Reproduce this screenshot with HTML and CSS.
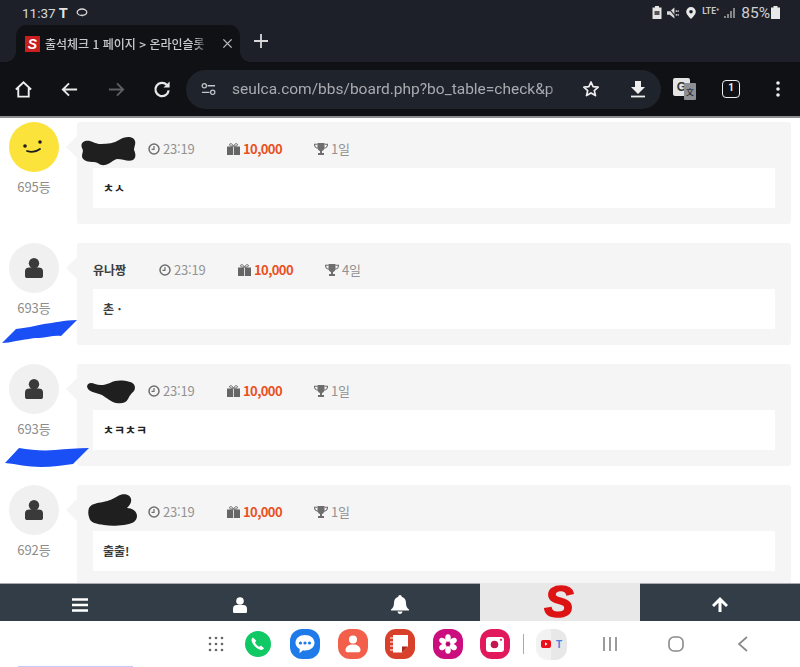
FILE: index.html
```html
<!DOCTYPE html>
<html lang="ko">
<head>
<meta charset="utf-8">
<title>출석체크</title>
<link rel="stylesheet" href="styles.css">
</head>
<body>
<div class="screen">
  <div class="status">
    <div class="status-left">
      <span class="clock">11:37</span>
      <span class="t-icon">T</span>
      <svg class="ic-chat" viewBox="0 0 12 9"><ellipse cx="6" cy="4.200" rx="4.800" ry="3.200" fill="none" stroke="#d8d8d8" stroke-width="1.300"/><path d="M4 7.500l3 1-1-2z" fill="#d8d8d8"/></svg>
    </div>
    <div class="status-right">
      <svg class="s1" viewBox="0 0 10 13"><path d="M3 0h4v1.500h2.500v11.500h-9v-11.500h2.500z" fill="#e4e4e4"/><rect x="2.500" y="5" width="5" height="4" fill="#555"/></svg>
      <svg class="s2" viewBox="0 0 14 12"><path d="M0 4h3l5-4v12l-5-4h-3z" fill="#d8d8d8"/><path d="M1 0l10 12" stroke="#1d2029" stroke-width="1.100"/><path d="M10 3v2M12 3v2M10 7v2M12 7v2" stroke="#d8d8d8" stroke-width="1.200"/></svg>
      <svg class="s3" viewBox="0 0 10 12"><path fill-rule="evenodd" d="M5 0a4.800 4.800 0 0 1 4.800 4.800c0 3-4.800 7.200-4.800 7.200s-4.800-4.200-4.800-7.200a4.800 4.800 0 0 1 4.800-4.800zm0 3a1.800 1.800 0 1 0 0 3.600 1.800 1.800 0 0 0 0-3.600z" fill="#e8e8e8"/></svg>
      <span class="lte">LTE⁺</span>
      <svg class="s4" viewBox="0 0 12 11"><path d="M1 9v2M4 7v4M7 4v7M10 1v10" stroke="#a8a8a8" stroke-width="1.500"/></svg>
      <span class="pct">85%</span>
      <svg class="s5" viewBox="0 0 9 13"><path d="M2.500 0h4v1.500h2.500v11.500h-9v-11.500h2.500z" fill="#e8e8e8"/></svg>
    </div>
  </div>

  <div class="tabs">
    <div class="tab">
      <span class="favicon">S</span>
      <span class="tab-title">출석체크 1 페이지 &gt; 온라인슬롯</span>
      <svg class="tab-x" viewBox="0 0 12 12"><path d="M1.500 1.500l9 9M10.500 1.500l-9 9" stroke="#b8babd" stroke-width="1.500"/></svg>
    </div>
    <svg class="tab-plus" viewBox="0 0 14 14"><path d="M7 0v14M0 7h14" stroke="#d8d8d8" stroke-width="1.800"/></svg>
  </div>

  <div class="toolbar">
    <svg class="tb home" viewBox="0 0 20 20"><path d="M2 10l8-7.500 8 7.500M4.500 8.500v9h11v-9" fill="none" stroke="#eee" stroke-width="2"/></svg>
    <svg class="tb back" viewBox="0 0 20 20"><path d="M18 10h-15M9.500 3.500l-6.500 6.500 6.500 6.500" fill="none" stroke="#e8e8e8" stroke-width="2"/></svg>
    <svg class="tb fwd" viewBox="0 0 20 20"><path d="M2 10h15M10.500 3.500l6.500 6.500-6.500 6.500" fill="none" stroke="#5c5e62" stroke-width="2"/></svg>
    <svg class="tb reload" viewBox="0 0 20 20"><path d="M16.500 11a7 7 0 1 1-2-6" fill="none" stroke="#e8e8e8" stroke-width="2.400"/><path d="M17.500 1.500v6.500h-6.500z" fill="#e8e8e8"/></svg>
    <div class="pill">
      <svg class="tune" viewBox="0 0 16 14"><circle cx="3.500" cy="3.500" r="2.300" fill="none" stroke="#c4c6ca" stroke-width="1.300"/><path d="M7 3.500h8M1 10.500h8" stroke="#c4c6ca" stroke-width="1.400"/><circle cx="12.500" cy="10.500" r="2.300" fill="none" stroke="#c4c6ca" stroke-width="1.300"/></svg>
      <span class="url">seulca.com/bbs/board.php?bo_table=check&amp;p</span>
      <svg class="star" viewBox="0 0 18 18"><path d="M9 2l2.100 4.700 5.100.5-3.900 3.400 1.200 5-4.500-2.700-4.500 2.700 1.200-5-3.900-3.400 5.100-.5z" fill="none" stroke="#eee" stroke-width="1.700" stroke-linejoin="round"/></svg>
      <svg class="dl" viewBox="0 0 16 18"><path d="M5 1h6v6h4l-7 7-7-7h4z" fill="#eee"/><path d="M1 16.500h14" stroke="#eee" stroke-width="1.800"/></svg>
    </div>
    <div class="translate"><span class="tr-g">G</span><span class="tr-x">文</span></div>
    <span class="count">1</span>
    <svg class="menu" viewBox="0 0 4 16"><circle cx="2" cy="2" r="1.800" fill="#eee"/><circle cx="2" cy="8" r="1.800" fill="#eee"/><circle cx="2" cy="14" r="1.800" fill="#eee"/></svg>
  </div>

  <main class="board">
    <article class="row">
      <div class="side">
        <div class="avatar avatar-smile">
          <svg viewBox="0 0 50 50"><circle cx="16" cy="24" r="1.800" fill="#1c1c1c"/><circle cx="31" cy="20" r="1.800" fill="#1c1c1c"/><path d="M18 29q7 2.500 13-2" fill="none" stroke="#1c1c1c" stroke-width="1.800" stroke-linecap="round"/></svg>
        </div>
        <div class="rank">695등</div>
      </div>
      <div class="card">
        <div class="meta">
          <span class="name name-hidden"></span>
          <span class="item"><svg class="i-clock" viewBox="0 0 12 12"><circle cx="6" cy="6" r="5" fill="none" stroke="#6e6e6e" stroke-width="1.500"/><path d="M6 3v3.300h-2.500" fill="none" stroke="#6e6e6e" stroke-width="1.200"/></svg>23:19</span>
          <span class="item"><svg class="i-gift" viewBox="0 0 13 12"><path d="M0 3.500h13v8.500h-13z" fill="#666"/><path d="M6.500 3.300c-1-3-4-3.300-4-1.500 0 1 2 1.500 4 1.500zm0 0c1-3 4-3.300 4-1.500 0 1-2 1.500-4 1.500zM6.500 3v9" fill="none" stroke="#666"/><path d="M6.500 3.500v8.500" stroke="#f5f5f5" stroke-width=".8"/></svg><b class="point">10,000</b></span>
          <span class="item"><svg class="i-cup" viewBox="0 0 14 12"><path d="M3.500 0h7v4.500c0 2-1.500 3.300-2.500 3.500v2h2v2h-6v-2h2v-2c-1-.2-2.500-1.500-2.500-3.500z" fill="#6e6e6e"/><path d="M3.500 1.200h-3c0 2.500 1.200 3.800 3.500 4M10.500 1.200h3c0 2.500-1.200 3.800-3.500 4" fill="none" stroke="#6e6e6e" stroke-width="1.100"/></svg>1일</span>
        </div>
        <div class="msg msg-jamo">ㅊㅅ</div>
      </div>
      <svg class="blob blob-1" viewBox="0 0 56 30"><path d="M1 11c-2-5 2-8 8-7 4 1 6 3 11 3 7 0 13-1 18-4 5-3 14-5 16 1 1 3-1 6-1 9 2 4 2 8-1 10-5 2-10-1-16-1-4 1-7 5-12 6-5 1-7-3-11-3-5 0-12-1-12-6 0-3 2-5 0-8z" fill="#1f1f1f"/></svg>
    </article>

    <article class="row">
      <div class="side">
        <div class="avatar">
          <svg class="person" viewBox="0 0 18 20"><circle cx="9" cy="5.300" r="5.200" fill="#3a3a3a"/><path d="M0 13c0-2.500 2-3.500 4.500-3.500h9c2.500 0 4.500 1 4.500 3.500v5c0 1.500-1 2-2 2h-14c-1 0-2-.5-2-2z" fill="#3a3a3a"/></svg>
        </div>
        <div class="rank">693등</div>
      </div>
      <div class="card">
        <div class="meta">
          <span class="name">유나짱</span>
          <span class="item"><svg class="i-clock" viewBox="0 0 12 12"><circle cx="6" cy="6" r="5" fill="none" stroke="#6e6e6e" stroke-width="1.500"/><path d="M6 3v3.300h-2.500" fill="none" stroke="#6e6e6e" stroke-width="1.200"/></svg>23:19</span>
          <span class="item"><svg class="i-gift" viewBox="0 0 13 12"><path d="M0 3.500h13v8.500h-13z" fill="#666"/><path d="M6.500 3.300c-1-3-4-3.300-4-1.500 0 1 2 1.500 4 1.500zm0 0c1-3 4-3.300 4-1.500 0 1-2 1.500-4 1.500zM6.500 3v9" fill="none" stroke="#666"/><path d="M6.500 3.500v8.500" stroke="#f5f5f5" stroke-width=".8"/></svg><b class="point">10,000</b></span>
          <span class="item"><svg class="i-cup" viewBox="0 0 14 12"><path d="M3.500 0h7v4.500c0 2-1.500 3.300-2.500 3.500v2h2v2h-6v-2h2v-2c-1-.2-2.500-1.500-2.500-3.500z" fill="#6e6e6e"/><path d="M3.500 1.200h-3c0 2.500 1.200 3.800 3.500 4M10.500 1.200h3c0 2.500-1.200 3.800-3.500 4" fill="none" stroke="#6e6e6e" stroke-width="1.100"/></svg>4일</span>
        </div>
        <div class="msg">촌 ·</div>
      </div>
      <svg class="scrawl scrawl-1" viewBox="0 0 76 24"><path d="M0 23l14-14c10-1 18-3 28-5 10-1 20-4 33-4l-16 16c-8-1-14 2-22 2-9 0-14 2-23 3-5 1-10 2-14 2z" fill="#1a4ff5"/></svg>
    </article>

    <article class="row">
      <div class="side">
        <div class="avatar">
          <svg class="person" viewBox="0 0 18 20"><circle cx="9" cy="5.300" r="5.200" fill="#3a3a3a"/><path d="M0 13c0-2.500 2-3.500 4.500-3.500h9c2.500 0 4.500 1 4.500 3.500v5c0 1.500-1 2-2 2h-14c-1 0-2-.5-2-2z" fill="#3a3a3a"/></svg>
        </div>
        <div class="rank">693등</div>
      </div>
      <div class="card">
        <div class="meta">
          <span class="name name-hidden"></span>
          <span class="item"><svg class="i-clock" viewBox="0 0 12 12"><circle cx="6" cy="6" r="5" fill="none" stroke="#6e6e6e" stroke-width="1.500"/><path d="M6 3v3.300h-2.500" fill="none" stroke="#6e6e6e" stroke-width="1.200"/></svg>23:19</span>
          <span class="item"><svg class="i-gift" viewBox="0 0 13 12"><path d="M0 3.500h13v8.500h-13z" fill="#666"/><path d="M6.500 3.300c-1-3-4-3.300-4-1.500 0 1 2 1.500 4 1.500zm0 0c1-3 4-3.300 4-1.500 0 1-2 1.500-4 1.500zM6.500 3v9" fill="none" stroke="#666"/><path d="M6.500 3.500v8.500" stroke="#f5f5f5" stroke-width=".8"/></svg><b class="point">10,000</b></span>
          <span class="item"><svg class="i-cup" viewBox="0 0 14 12"><path d="M3.500 0h7v4.500c0 2-1.500 3.300-2.500 3.500v2h2v2h-6v-2h2v-2c-1-.2-2.500-1.500-2.500-3.500z" fill="#6e6e6e"/><path d="M3.500 1.200h-3c0 2.500 1.200 3.800 3.500 4M10.500 1.200h3c0 2.500-1.200 3.800-3.500 4" fill="none" stroke="#6e6e6e" stroke-width="1.100"/></svg>1일</span>
        </div>
        <div class="msg msg-jamo">ㅊㅋㅊㅋ</div>
      </div>
      <svg class="blob blob-2" viewBox="0 0 50 24"><path d="M1 7c0-4 4-5 8-3 5 2 10 1 15-1 6-3 12-3 20-1 5 1 6 6 4 9-3 3-4 4-6 8-2 4-6 5-12 4-5-1-9-5-14-8-5-2-15-3-15-9z" fill="#1f1f1f"/></svg>
      <svg class="scrawl scrawl-2" viewBox="0 0 84 20"><path d="M0 16l14-15c12 2 24 3 36 2 11-1 22-2 34-2l-16 16c-10 1-20 3-32 3-14 0-24-3-36-4z" fill="#1a4ff5"/></svg>
    </article>

    <article class="row">
      <div class="side">
        <div class="avatar">
          <svg class="person" viewBox="0 0 18 20"><circle cx="9" cy="5.300" r="5.200" fill="#3a3a3a"/><path d="M0 13c0-2.500 2-3.500 4.500-3.500h9c2.500 0 4.500 1 4.500 3.500v5c0 1.500-1 2-2 2h-14c-1 0-2-.5-2-2z" fill="#3a3a3a"/></svg>
        </div>
        <div class="rank">692등</div>
      </div>
      <div class="card">
        <div class="meta">
          <span class="name name-hidden"></span>
          <span class="item"><svg class="i-clock" viewBox="0 0 12 12"><circle cx="6" cy="6" r="5" fill="none" stroke="#6e6e6e" stroke-width="1.500"/><path d="M6 3v3.300h-2.500" fill="none" stroke="#6e6e6e" stroke-width="1.200"/></svg>23:19</span>
          <span class="item"><svg class="i-gift" viewBox="0 0 13 12"><path d="M0 3.500h13v8.500h-13z" fill="#666"/><path d="M6.500 3.300c-1-3-4-3.300-4-1.500 0 1 2 1.500 4 1.500zm0 0c1-3 4-3.300 4-1.500 0 1-2 1.500-4 1.500zM6.500 3v9" fill="none" stroke="#666"/><path d="M6.500 3.500v8.500" stroke="#f5f5f5" stroke-width=".8"/></svg><b class="point">10,000</b></span>
          <span class="item"><svg class="i-cup" viewBox="0 0 14 12"><path d="M3.500 0h7v4.500c0 2-1.500 3.300-2.500 3.500v2h2v2h-6v-2h2v-2c-1-.2-2.500-1.500-2.500-3.500z" fill="#6e6e6e"/><path d="M3.500 1.200h-3c0 2.500 1.200 3.800 3.500 4M10.500 1.200h3c0 2.500-1.200 3.800-3.500 4" fill="none" stroke="#6e6e6e" stroke-width="1.100"/></svg>1일</span>
        </div>
        <div class="msg">출출!</div>
      </div>
      <svg class="blob blob-3" viewBox="0 0 50 33"><path d="M1 14c2-4 8-5 14-6 6-1 10-3 15-6 5-3 12-2 13 3 1 4-2 7-4 9 5 0 10 3 10 8 0 6-6 8-13 9-8 1-14 1-20 0-7-1-14-2-15-8-1-3-1-6 0-9z" fill="#1f1f1f"/></svg>
    </article>
  </main>

  <nav class="tabbar">
    <div class="tabbar-cell"><svg class="nav-bars" viewBox="0 0 16 14"><path d="M0 1.500h16M0 7h16M0 12.500h16" stroke="#fff" stroke-width="2.400"/></svg></div>
    <div class="tabbar-cell"><svg class="nav-user" viewBox="0 0 14 16"><circle cx="7" cy="4" r="3.800" fill="#fff"/><path d="M0 11.500c0-2.500 2-3.500 3.500-3.500h7c1.500 0 3.500 1 3.500 3.500v3c0 1-.7 1.500-1.500 1.500h-11c-.8 0-1.500-.5-1.500-1.500z" fill="#fff"/></svg></div>
    <div class="tabbar-cell"><svg class="nav-bell" viewBox="0 0 18 19"><path d="M9 0c1 0 1.700.8 1.700 1.700 3 .8 4.300 3.300 4.300 6.300 0 3 .8 4.700 3 6.500v1h-18v-1c2.200-1.800 3-3.500 3-6.500 0-3 1.300-5.500 4.300-6.300 0-.9.700-1.700 1.700-1.700zM6.500 16.500h5a2.500 2.500 0 0 1-5 0z" fill="#fff"/></svg></div>
    <div class="tabbar-cell tabbar-logo"><span class="logo-s">S</span></div>
    <div class="tabbar-cell"><svg class="nav-up" viewBox="0 0 16 15"><path d="M8 0l8 8-2 2-4.500-4.300v9.300h-3v-9.300l-4.500 4.300-2-2z" fill="#fff"/></svg></div>
  </nav>

  <footer class="dock">
    <svg class="grid-ic" viewBox="0 0 16 16"><g fill="#666"><circle cx="2" cy="2" r="1.300"/><circle cx="8" cy="2" r="1.300"/><circle cx="14" cy="2" r="1.300"/><circle cx="2" cy="8" r="1.300"/><circle cx="8" cy="8" r="1.300"/><circle cx="14" cy="8" r="1.300"/><circle cx="2" cy="14" r="1.300"/><circle cx="8" cy="14" r="1.300"/><circle cx="14" cy="14" r="1.300"/></g></svg>
    <div class="apps">
      <svg class="app" viewBox="0 0 30 30"><circle cx="15" cy="15" r="13" fill="#10c864"/><path d="M10 8.500c-1.500 1-2 2.500-1 4.500 1.500 3.500 4 6 7.500 7.500 2 .8 3.500.3 4.500-1.200l-3-2.800-1.800 1.200c-2-1-3.200-2.300-4.200-4.200l1.300-1.800z" fill="#fff"/></svg>
      <svg class="app" viewBox="0 0 30 30"><rect width="30" height="30" rx="12" fill="#1f7bea"/><path d="M15 6c5.500 0 9.500 3.300 9.500 7.800s-4 7.700-9.500 7.700c-.7 0-1.300 0-2-.2l-3.500 3 .2-4.200c-2.600-1.400-4.200-3.700-4.200-6.300 0-4.500 4-7.800 9.500-7.800z" fill="#fff"/><g fill="#1f7bea"><circle cx="10.500" cy="14" r="1.600"/><circle cx="15" cy="14" r="1.600"/><circle cx="19.500" cy="14" r="1.600"/></g></svg>
      <svg class="app" viewBox="0 0 30 30"><rect width="30" height="30" rx="12" fill="#f2604c"/><circle cx="15" cy="10.500" r="4" fill="#fff"/><path d="M7.500 21c0-3.500 3.500-5.500 7.500-5.500s7.500 2 7.500 5.500c0 1.500-1 2.300-2.500 2.300h-10c-1.500 0-2.500-.8-2.500-2.300z" fill="#fff"/></svg>
      <svg class="app" viewBox="0 0 30 30"><rect width="30" height="30" rx="11" fill="#d9402c"/><path d="M8 6h15v11.500l-6 6h-9z" fill="#fff"/><path d="M23 17.500h-6v6z" fill="#a8281a"/><path d="M5 9h3M5 13h3M5 17h3M5 21h3" stroke="#fff" stroke-width="1.200"/></svg>
      <svg class="app" viewBox="0 0 30 30"><rect width="30" height="30" rx="12" fill="#cc0d7e"/><g fill="#fff"><ellipse cx="15" cy="9" rx="2.800" ry="3.800"/><ellipse cx="15" cy="21" rx="2.800" ry="3.800"/><ellipse cx="15" cy="9" rx="2.800" ry="3.800" transform="rotate(60 15 15)"/><ellipse cx="15" cy="9" rx="2.800" ry="3.800" transform="rotate(120 15 15)"/><ellipse cx="15" cy="9" rx="2.800" ry="3.800" transform="rotate(240 15 15)"/><ellipse cx="15" cy="9" rx="2.800" ry="3.800" transform="rotate(300 15 15)"/></g><circle cx="15" cy="15" r="1.800" fill="#a80c68"/></svg>
      <svg class="app" viewBox="0 0 30 30"><rect width="30" height="30" rx="12" fill="#e2185c"/><rect x="6" y="8" width="18" height="15" rx="3" fill="#fff"/><circle cx="14.500" cy="15.500" r="3.800" fill="#c21650"/><circle cx="21" cy="10.800" r="1.100" fill="#e2185c"/></svg>
    </div>
    <span class="dock-sep"></span>
    <div class="combo">
      <svg class="combo-yt" viewBox="0 0 10 8"><rect width="10" height="8" rx="2" fill="#e8121a"/><path d="M4 2.300l2.500 1.700-2.500 1.700z" fill="#fff"/></svg>
      <span class="combo-t">T</span>
    </div>
    <svg class="sys sys-recent" viewBox="0 0 16 16"><path d="M2 1v14M8 1v14M14 1v14" stroke="#8a8a8a" stroke-width="1.700"/></svg>
    <svg class="sys sys-home" viewBox="0 0 16 16"><rect x="1" y="1" width="14" height="14" rx="5" fill="none" stroke="#8a8a8a" stroke-width="1.600"/></svg>
    <svg class="sys sys-back" viewBox="0 0 12 16"><path d="M10 1l-8 7 8 7" fill="none" stroke="#8a8a8a" stroke-width="1.700"/></svg>
    <span class="peek"></span>
  </footer>
</div>
</body>
</html>
```

FILE: styles.css
```css
* { box-sizing: border-box; }
html, body { margin: 0; height: 100%; background: #fff; }
body { font-family: "Noto Sans CJK KR", "Noto Sans", sans-serif; overflow: hidden; }

.screen {
  width: 800px;
  height: 667px;
  display: flex;
  flex-direction: column;
  overflow: hidden;
  filter: blur(0.45px);
}

/* status bar */
.status {
  height: 25px;
  flex: none;
  background: #1d2029;
  display: flex;
  justify-content: space-between;
  align-items: center;
  padding: 0 20px 0 22px;
  color: #d8d8d8;
}
.status-left, .status-right { display: flex; align-items: center; }
.clock { font: 13.500px "Roboto", sans-serif; width: 37px; }
.t-icon { font: bold 14px "Liberation Sans", sans-serif; color: #e4e4e4; width: 17px; }
.ic-chat { width: 12px; height: 9px; }
.status-right svg { flex: none; }
.s1 { width: 10px; height: 13px; margin-right: 5px; }
.s2 { width: 13px; height: 12px; margin-right: 6px; }
.s3 { width: 10px; height: 12px; margin-right: 6px; }
.lte { font: bold 8.500px "Roboto", sans-serif; color: #c8c8c8; width: 22px; margin-top: -4px; }
.s4 { width: 12px; height: 11px; margin-right: 5px; }
.pct { font: 15.500px "Roboto", sans-serif; color: #d0d0d0; margin-right: 1px; }
.s5 { width: 9px; height: 13px; }

/* tab strip */
.tabs {
  height: 37px;
  flex: none;
  background: #1d2029;
  display: flex;
  align-items: flex-end;
  padding-left: 16px;
}
.tab {
  position: relative;
  width: 224px;
  height: 37px;
  background: #101114;
  border-radius: 11px 11px 0 0;
  display: flex;
  align-items: center;
  padding: 0 7px 0 9px;
}
.tab::before, .tab::after {
  content: "";
  position: absolute;
  bottom: 0;
  width: 10px;
  height: 10px;
}
.tab::before { left: -10px; background: radial-gradient(circle at 0 0, #1d2029 9.500px, #101114 10px); }
.tab::after { right: -10px; background: radial-gradient(circle at 100% 0, #1d2029 9.500px, #101114 10px); }
.favicon {
  width: 15px;
  height: 16px;
  flex: none;
  background: #c9201f;
  color: #fff;
  font: italic bold 14px/16px "Liberation Sans", sans-serif;
  text-align: center;
  margin-right: 5px;
}
.tab-title {
  flex: 1;
  min-width: 0;
  font-size: 12px;
  font-weight: 500;
  line-height: 16px;
  color: #c8c9cc;
  white-space: nowrap;
  overflow: hidden;
  -webkit-mask-image: linear-gradient(90deg, #000 88%, transparent 97%);
  mask-image: linear-gradient(90deg, #000 88%, transparent 97%);
}
.tab-x { width: 11px; height: 11px; flex: none; margin-left: 8px; }
.tab-plus { width: 14px; height: 14px; margin: 0 0 14px 14px; }

/* toolbar */
.toolbar {
  height: 54px;
  flex: none;
  background: #101114;
  display: flex;
  align-items: center;
  padding-left: 14px;
}
.tb { width: 19px; height: 19px; flex: none; }
.home { margin-right: 27px; }
.back { margin-right: 28px; }
.fwd { margin-right: 27px; }
.reload { margin-right: 14px; }
.pill {
  width: 475px;
  height: 39px;
  background: #1f232b;
  border-radius: 20px;
  display: flex;
  align-items: center;
  padding-left: 15px;
  flex: none;
}
.tune { width: 15px; height: 14px; flex: none; margin-right: 16px; }
.url {
  width: 329px;
  font: 15.500px "Roboto", sans-serif;
  color: #a9abb0;
  white-space: nowrap;
  overflow: hidden;
  flex: none;
  -webkit-mask-image: linear-gradient(90deg, #000 96%, transparent 100%);
  mask-image: linear-gradient(90deg, #000 96%, transparent 100%);
}
.star { width: 18px; height: 18px; flex: none; margin-left: 21px; }
.dl { width: 16px; height: 18px; flex: none; margin-left: 30px; }
.translate { position: relative; width: 23px; height: 22px; margin-left: 12px; flex: none; }
.tr-g {
  display: block;
  width: 17px;
  height: 18px;
  background: #e4e4e4;
  border-radius: 2px;
  font: bold 12px/18px "Liberation Sans", sans-serif;
  color: #333;
  text-align: center;
}
.tr-x {
  position: absolute;
  right: 0;
  bottom: 0;
  width: 12px;
  height: 17px;
  background: #8d8f94;
  border-radius: 1px;
  font-size: 8px;
  line-height: 17px;
  color: #111;
  text-align: center;
}
.count {
  width: 18px;
  height: 18px;
  margin-left: 26px;
  flex: none;
  border: 1.800px solid #eee;
  border-radius: 4px;
  color: #eee;
  font: bold 10px/14px "Roboto", sans-serif;
  text-align: center;
}
.menu { width: 4px; height: 16px; margin-left: 36px; flex: none; }

/* board */
.board {
  flex: 1;
  min-height: 0;
  overflow: hidden;
  background: #fff;
  border-top: 2px solid #8d8e90;
  padding: 4px 9px 0;
  display: flex;
  flex-direction: column;
  gap: 19px;
}
.row { display: flex; flex: none; height: 102px; position: relative; }
.side { width: 50px; flex: none; display: flex; flex-direction: column; align-items: center; }
.avatar {
  width: 50px;
  height: 50px;
  border-radius: 50%;
  background: #f0f0f0;
  display: flex;
  align-items: center;
  justify-content: center;
  flex: none;
}
.avatar-smile { background: #fbe33b; }
.avatar-smile svg { width: 50px; height: 50px; }
.person { width: 18px; height: 20px; }
.rank { font-size: 13px; line-height: 18px; color: #8c8c8c; margin-top: 6px; }
.card {
  position: relative;
  margin-left: 18px;
  width: 714px;
  height: 102px;
  flex: none;
  background: #f5f5f5;
  border-radius: 3px;
  padding: 0 16px;
}
.card::before {
  content: "";
  position: absolute;
  left: -11px;
  top: 14px;
  border-style: solid;
  border-width: 11px 11px 11px 0;
  border-color: transparent #f5f5f5 transparent transparent;
}
.meta { height: 46px; display: flex; align-items: center; gap: 32px; padding-top: 7px; }
.name { font-size: 12px; font-weight: 700; color: #3c3c3c; width: 34px; white-space: nowrap; }
.name-hidden { width: 23px; }
.item { display: flex; align-items: center; font-size: 13px; line-height: 18px; color: #929292; letter-spacing: -0.2px; }
.item svg { flex: none; }
.i-clock { width: 12px; height: 12px; margin-right: 3px; }
.i-gift { width: 13px; height: 12px; margin-right: 3.500px; }
.i-cup { width: 14px; height: 12px; margin-right: 3px; }
.point { color: #e9501e; font-weight: 700; letter-spacing: -0.6px; }
.msg {
  height: 40px;
  background: #fff;
  padding-left: 10px;
  font-size: 12px;
  line-height: 40px;
  color: #3c3c3c;
  font-weight: 700;
}
.msg-jamo { color: #222; }
.blob { position: absolute; }
.blob-1 { left: 72px; top: 15px; width: 56px; height: 30px; }
.blob-2 { left: 77px; top: 16px; width: 50px; height: 24px; }
.blob-3 { left: 79px; top: 9px; width: 50px; height: 33px; }
.scrawl { position: absolute; z-index: 1; }
.scrawl-1 { left: -7px; top: 77px; width: 76px; height: 24px; }
.scrawl-2 { left: -4px; top: 83px; width: 84px; height: 20px; }

/* bottom nav */
.tabbar {
  height: 38px;
  flex: none;
  display: grid;
  grid-template-columns: repeat(5, 160px);
  background: #333d47;
  border-top: 1px solid #a8acb0;
  position: relative;
}
.tabbar-cell { display: flex; align-items: center; justify-content: center; padding-top: 4px; }
.tabbar-logo { background: #e8e8e8; padding-top: 0; margin-top: -1px; }
.logo-s {
  font: italic bold 44px/38px "Liberation Sans", sans-serif;
  color: #dd1414;
  -webkit-text-stroke: 1.500px #dd1414;
  margin-right: 2px;
}
.nav-bars { width: 16px; height: 14px; }
.nav-user { width: 14px; height: 16px; }
.nav-bell { width: 18px; height: 19px; }
.nav-up { width: 16px; height: 15px; }

/* dock */
.dock {
  height: 46px;
  flex: none;
  background: #fff;
  display: flex;
  align-items: center;
  padding: 0 0 0 208px;
  position: relative;
}
.grid-ic { width: 16px; height: 16px; flex: none; }
.apps { display: flex; gap: 17.400px; margin-left: 19px; flex: none; }
.app { width: 30px; height: 30px; display: block; }
.dock-sep { width: 1px; height: 20px; background: #aaa; flex: none; margin-left: 13px; }
.combo {
  width: 31px;
  height: 31px;
  margin-left: 12px;
  flex: none;
  border-radius: 12px;
  background: linear-gradient(90deg, #f2f2f2 50%, #e8e8e8 50%);
  display: flex;
  align-items: center;
  justify-content: center;
  gap: 5px;
}
.combo-yt { width: 10px; height: 8px; }
.combo-t { font: bold 10px "Liberation Sans", sans-serif; color: #4a7fe0; }
.sys { flex: none; }
.sys-recent { width: 16px; height: 16px; margin-left: 35px; }
.sys-home { width: 16px; height: 16px; margin-left: 50px; }
.sys-back { width: 12px; height: 16px; margin-left: 53px; }
.peek {
  position: absolute;
  left: 18px;
  bottom: 0;
  width: 115px;
  height: 1px;
  background: #c9c9f5;
}
```
